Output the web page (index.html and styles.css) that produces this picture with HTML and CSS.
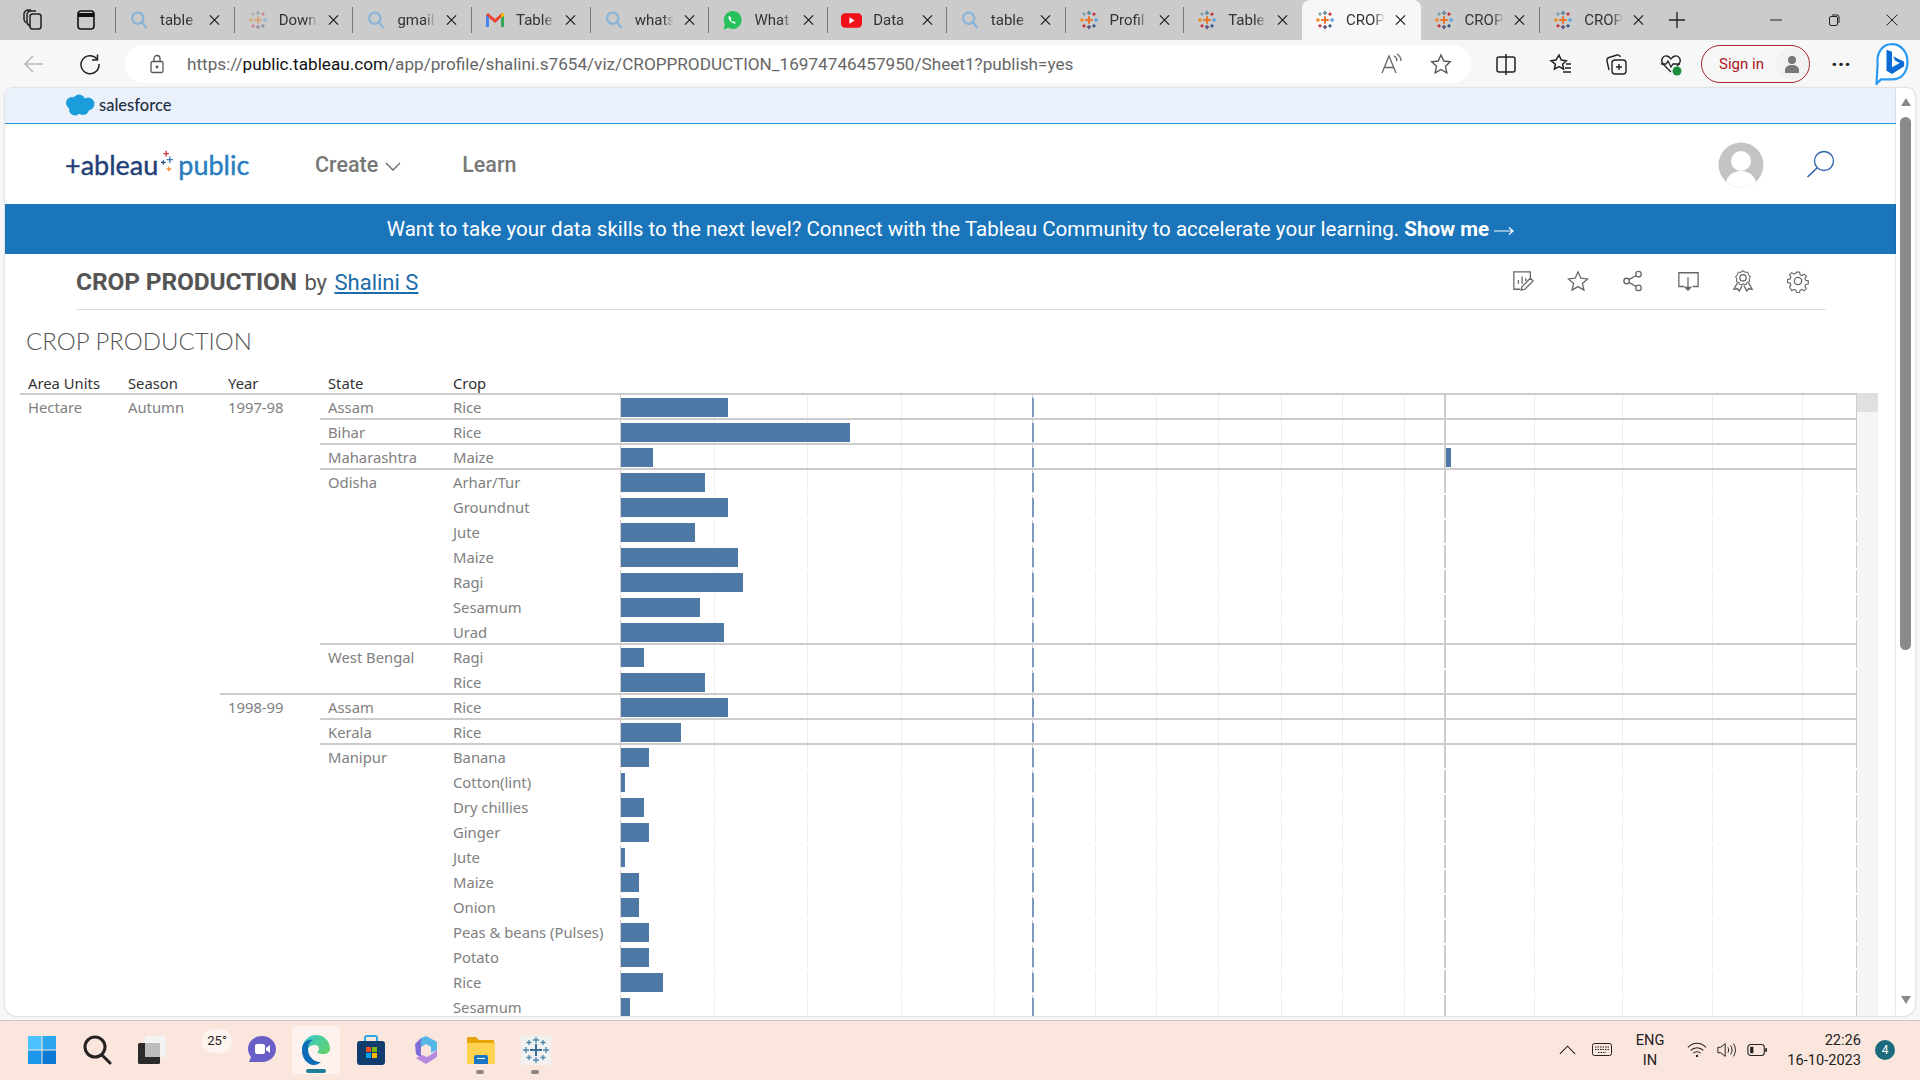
FILE: index.html
```html
<!DOCTYPE html>
<html lang="en">
<head>
    <meta charset="UTF-8">
    <title>CROP PRODUCTION</title>
    <link rel="stylesheet" href="styles.css">
</head>
<body>

<svg class="defs" width="0" height="0">
    <symbol id="tb" viewBox="0 0 24 24">
        <path d="M12 7.500v9M7.500 12h9" stroke="#e8762d" stroke-width="2.400"/>
        <path d="M12 1v5M9.500 3.500h5" stroke="#5b879b" stroke-width="1.800"/>
        <path d="M12 18v5M9.500 20.500h5" stroke="#59507a" stroke-width="1.800"/>
        <path d="M3.500 9.500v5M1 12h5" stroke="#eb912b" stroke-width="1.800"/>
        <path d="M20.500 9.500v5M18 12h5" stroke="#5fa2dd" stroke-width="1.800"/>
        <path d="M6 3v4M4 5h4" stroke="#7099a6" stroke-width="1.600"/>
        <path d="M18 3v4M16 5h4" stroke="#c72035" stroke-width="1.600"/>
        <path d="M6 17v4M4 19h4" stroke="#c72035" stroke-width="1.600"/>
        <path d="M18 17v4M16 19h4" stroke="#1f457e" stroke-width="1.600"/>
    </symbol>
    <symbol id="srch" viewBox="0 0 16 16">
        <circle cx="7" cy="6.500" r="4.500" fill="none" stroke="#8ab4d8" stroke-width="1.800"/>
        <path d="M10.500 10l3.500 4.500" stroke="#8ab4d8" stroke-width="1.800"/>
    </symbol>
    <symbol id="close" viewBox="0 0 12 12">
        <path d="M1 1l10 10M11 1L1 11" stroke="#1c1c1c" stroke-width="1.300"/>
    </symbol>
</svg>

<div class="tabstrip">
    <div class="strip-btns">
        <svg class="strip-ico" viewBox="0 0 24 24" fill="none" stroke="#222" stroke-width="1.500"><rect x="9" y="6" width="11" height="15" rx="2.500"/><path d="M9 18c-2-1-3-2-3-4V7c0-2 1-4 4-4h5"/><path d="M5 15c-1-1-2-2-2-4V6c0-2 2-4 4-4h3"/></svg>
        <svg class="strip-ico" viewBox="0 0 24 24" fill="none" stroke="#111" stroke-width="1.600"><rect x="4" y="3" width="16" height="18" rx="3"/><path d="M4 7h16" stroke-width="4"/></svg>
    </div>
    <div class="tab"><svg class="fav"><use href="#srch"/></svg><span class="tab-title">table</span><svg class="tab-x"><use href="#close"/></svg></div>
    <div class="tab"><svg class="fav faded"><use href="#tb"/></svg><span class="tab-title">Down</span><svg class="tab-x"><use href="#close"/></svg></div>
    <div class="tab"><svg class="fav"><use href="#srch"/></svg><span class="tab-title">gmail</span><svg class="tab-x"><use href="#close"/></svg></div>
    <div class="tab">
        <svg class="fav" viewBox="0 0 20 16"><path d="M1 15V3l3-1v13z" fill="#4285f4"/><path d="M19 15V3l-3-1v13z" fill="#34a853"/><path d="M1 3l2-2 7 6 7-6 2 2-9 8z" fill="#ea4335"/><path d="M16 2l3-1v3l-3 2z" fill="#fbbc04"/></svg>
        <span class="tab-title">Table</span><svg class="tab-x"><use href="#close"/></svg>
    </div>
    <div class="tab"><svg class="fav"><use href="#srch"/></svg><span class="tab-title">whats</span><svg class="tab-x"><use href="#close"/></svg></div>
    <div class="tab">
        <svg class="fav big" viewBox="0 0 20 20"><path d="M1.500 18.500l1.300-4.800A8.500 8.500 0 1 1 6.200 17z" fill="#25c15a"/><path d="M7 5.500c-1.500 1-1 3 .8 5s4 3 5.400 1.800l-1.700-1.600-1 .6c-1-.4-1.800-1.300-2.200-2.300l.7-1z" fill="#fff"/></svg>
        <span class="tab-title">What</span><svg class="tab-x"><use href="#close"/></svg>
    </div>
    <div class="tab">
        <svg class="fav big" viewBox="0 0 20 20"><rect y="3" width="20" height="14" rx="4" fill="#f0101a"/><path d="M8 7l5 3-5 3z" fill="#fff"/></svg>
        <span class="tab-title">Data</span><svg class="tab-x"><use href="#close"/></svg>
    </div>
    <div class="tab"><svg class="fav"><use href="#srch"/></svg><span class="tab-title">table</span><svg class="tab-x"><use href="#close"/></svg></div>
    <div class="tab"><svg class="fav"><use href="#tb"/></svg><span class="tab-title">Profil</span><svg class="tab-x"><use href="#close"/></svg></div>
    <div class="tab"><svg class="fav"><use href="#tb"/></svg><span class="tab-title">Table</span><svg class="tab-x"><use href="#close"/></svg></div>
    <div class="tab active"><svg class="fav"><use href="#tb"/></svg><span class="tab-title">CROP</span><svg class="tab-x"><use href="#close"/></svg></div>
    <div class="tab"><svg class="fav"><use href="#tb"/></svg><span class="tab-title">CROP</span><svg class="tab-x"><use href="#close"/></svg></div>
    <div class="tab"><svg class="fav"><use href="#tb"/></svg><span class="tab-title">CROP</span><svg class="tab-x"><use href="#close"/></svg></div>
    <svg class="new-tab" viewBox="0 0 20 20"><path d="M10 1v18M1 10h18" stroke="#222" stroke-width="1.500"/></svg>
    <div class="win-btns">
        <svg viewBox="0 0 12 12"><path d="M0 6h12" stroke="#222"/></svg>
        <svg viewBox="0 0 12 12" fill="none" stroke="#222"><rect x="1.500" y="2.500" width="8" height="9" rx="1.500"/><path d="M4 1h5a2 2 0 0 1 2 2v6"/></svg>
        <svg viewBox="0 0 12 12"><path d="M.5.500l11 11M11.500.500l-11 11" stroke="#222"/></svg>
    </div>
</div>

<div class="toolbar">
    <svg class="tool-ico back" viewBox="0 0 24 24" fill="none" stroke="#b9b9b9" stroke-width="1.500"><path d="M21 12H3M11 4l-8 8 8 8"/></svg>
    <svg class="tool-ico reload" viewBox="0 0 24 24" fill="none" stroke="#222" stroke-width="1.500"><path d="M19 7a9 9 0 1 0 2 5"/><path d="M19.500 2.500V8H14"/></svg>
    <div class="addressbar">
        <svg class="lock" viewBox="0 0 16 20" fill="none" stroke="#555" stroke-width="1.300"><rect x="2" y="7.500" width="12" height="11" rx="1.500"/><path d="M5 7.500V4.500a3 3 0 0 1 6 0v3"/><circle cx="8" cy="13" r=".8" fill="#555"/></svg>
        <div class="url">https://<b>public.tableau.com</b>/app/profile/shalini.s7654/viz/CROPPRODUCTION_16974746457950/Sheet1?publish=yes</div>
        <svg class="addr-ico" viewBox="0 0 24 24" fill="none" stroke="#666" stroke-width="1.300"><path d="M3 21L10 4l7 17M5.500 15.500h9"/><path d="M15 4c2 1 3 3 3 5M18 2c3 2 4 4 4 7"/></svg>
        <svg class="addr-ico" viewBox="0 0 24 24" fill="none" stroke="#555" stroke-width="1.400"><path d="M12 3l2.800 6 6.500.8-4.800 4.500 1.300 6.500-5.800-3.300-5.800 3.300 1.300-6.500L2.700 9.800 9.200 9z"/></svg>
    </div>
    <div class="tool-group">
        <svg class="tool-ico" viewBox="0 0 24 24" fill="none" stroke="#222" stroke-width="1.500"><rect x="3" y="5" width="18" height="15" rx="2"/><path d="M12 2v21"/></svg>
        <svg class="tool-ico" viewBox="0 0 24 24" fill="none" stroke="#222" stroke-width="1.500"><path d="M10 3l2.300 5 5 .7-3.700 3.500 1 5-4.600-2.500-4.600 2.500 1-5L2 8.700l5-.7zM17 12h5M16 16h6M14 20h8"/></svg>
        <svg class="tool-ico" viewBox="0 0 24 24" fill="none" stroke="#222" stroke-width="1.400"><rect x="8" y="8" width="14" height="14" rx="3"/><path d="M15 12v6M12 15h6M5 18L3 9c-.4-2 .6-3 2-3.500L13 3c2-.4 3 .5 3.500 2"/></svg>
        <svg class="tool-ico" viewBox="0 0 24 24" fill="none" stroke="#222" stroke-width="1.300"><path d="M12 20L4 12c-3-4 0-9 4-8 2 .4 3 1.500 4 3 1-1.500 2-2.600 4-3 4-1 7 4 4 8l-2 2"/><path d="M2 12h5l2-3 3 6 2-3h7"/><circle cx="18" cy="19" r="4.500" fill="#1e8e3e" stroke="none"/></svg>
    </div>
    <div class="signin"><span>Sign in</span><div class="signin-av"><svg viewBox="0 0 16 20"><circle cx="8" cy="6" r="4" fill="#777"/><path d="M1 19v-3c0-3 3-5 7-5s7 2 7 5v3z" fill="#777"/></svg></div></div>
    <div class="dots">&middot;&middot;&middot;</div>
    <svg class="bing" viewBox="0 0 30 38"><path d="M15 1c8 0 14 7 14 16 0 10-6 16-14 16H5l-4 4 1-18C1 9 6 1 15 1z" fill="#fff" stroke="#2b9af3" stroke-width="2"/><path d="M10 6l5 2v14l7-4-4-2-2-4 10 5v4l-11 7-5-3z" fill="#0c6cd4"/></svg>
</div>

<div class="viewport">
    <div class="page">
        <div class="sf-bar">
            <svg class="sf-cloud" viewBox="0 0 30 22" fill="#1b9ddb"><circle cx="7" cy="9" r="6"/><circle cx="14" cy="6.500" r="6"/><circle cx="23" cy="10" r="6.500"/><circle cx="18" cy="15" r="6"/><circle cx="10" cy="15.500" r="6"/></svg>
            <span class="sf-name">salesforce</span>
        </div>
        <header class="site-header">
            <div class="logo">+ableau<svg class="logo-spark" viewBox="0 0 18 30"><path d="M7 3v6M4 6h6" stroke="#d8333f" stroke-width="1.500"/><path d="M11 9v7M7.500 12.500h7" stroke="#3b78b5" stroke-width="1.500"/><path d="M4 13v5M1.500 15.500h5" stroke="#1f457e" stroke-width="1.300"/><path d="M10 20v5M7.500 22.500h5" stroke="#eb912b" stroke-width="1.500"/></svg><span class="logo-public">public</span></div>
            <nav class="main-nav">
                <a class="nav-create">Create<svg viewBox="0 0 16 10" fill="none" stroke="#666" stroke-width="1.300"><path d="M1 1l7 7 7-7"/></svg></a>
                <a>Learn</a>
            </nav>
            <div class="avatar"><svg viewBox="0 0 46 46"><defs><clipPath id="av"><circle cx="23" cy="23" r="22.500"/></clipPath></defs><circle cx="23" cy="23" r="22.500" fill="#c4c4c4"/><g clip-path="url(#av)" fill="#fff"><circle cx="23" cy="19" r="10"/><ellipse cx="23" cy="42" rx="15" ry="13"/></g></svg></div>
            <svg class="site-search" viewBox="0 0 30 30" fill="none" stroke="#2b5fa8" stroke-width="1.300"><circle cx="18" cy="11" r="9.500"/><path d="M11 18L1.500 27" stroke-width="1.600"/></svg>
        </header>
        <div class="banner">Want to take your data skills to the next level? Connect with the Tableau Community to accelerate your learning. <b>Show me</b> <svg class="banner-arrow" viewBox="0 0 20 10" fill="none" stroke="white" stroke-width="1.200"><path d="M0 5h19M15 1.500L19 5l-4 3.500"/></svg></div>
        <div class="viz-head">
            <div class="viz-name"><b>CROP PRODUCTION</b> <span class="by">by</span> <a>Shalini S</a></div>
            <div class="viz-actions">
                <svg viewBox="0 0 24 24"><path d="M20 9V2H2v19h7M7 15v-4M11 15V7M15 12V9M10 22l1-4 9-9 3 3-9 9z"/></svg>
                <svg viewBox="0 0 24 24"><path d="M12 2l3 7 7.500.7-5.700 5 1.700 7.300-6.500-3.900-6.500 3.900 1.700-7.300-5.700-5L9 9z"/></svg>
                <svg viewBox="0 0 24 24"><circle cx="5" cy="12" r="3"/><circle cx="18" cy="4.500" r="3"/><circle cx="18" cy="19.500" r="3"/><path d="M7.600 10.500l7.800-4.500M7.600 13.500l7.800 4.500"/></svg>
                <svg viewBox="0 0 24 24"><path d="M8 18H2V3h21v15h-6M12 8v12"/><path d="M9 19h6l-3 3z" fill="#666"/></svg>
                <svg viewBox="0 0 24 24"><path d="M12 1l3 2 3.500 0 1 3.500L22 9l-1.500 3 .5 3.500-3 1.500-2 3-4-1-4 1-2-3-3-1.500.5-3.500L2 9l2.500-2.500L5.500 3 9 3z" transform="translate(2.400 0) scale(.8)"/><circle cx="12" cy="8.500" r="3.500"/><path d="M6 14l-4 7 4-.5 2 2.500 3-6M18 14l4 7-4-.5-2 2.500-3-6"/></svg>
                <svg viewBox="0 0 24 24"><circle cx="12" cy="12" r="4"/><path d="M10 1h4l.6 3.200 2.300 1 2.700-1.800 2.800 2.800-1.800 2.700 1 2.300 3.200.6v4l-3.200.6-1 2.300 1.800 2.700-2.800 2.800-2.700-1.800-2.300 1-.6 3.200h-4l-.6-3.200-2.300-1-2.700 1.800L1.400 19.600l1.800-2.700-1-2.300L-1 14v-4l3.200-.6 1-2.300L1.400 4.400l2.800-2.800 2.700 1.800 2.300-1z" transform="translate(1.500 1.500) scale(.875)"/></svg>
            </div>
        </div>
        <section class="viz">
            <h2 class="viz-title">CROP PRODUCTION</h2>
            <div class="sheet">
                <div class="table">
                    <div class="thead">
                        <div class="c-area">Area Units</div>
                        <div class="c-season">Season</div>
                        <div class="c-year">Year</div>
                        <div class="c-state">State</div>
                        <div class="c-crop">Crop</div>
                    </div>
                    <div class="row first"><div class="c-area">Hectare</div><div class="c-season">Autumn</div><div class="c-year">1997-98</div><div class="c-state">Assam</div><div class="c-crop">Rice</div><div class="plot"><div class="pane p1"><div class="bar" style="width:107px"></div></div><div class="pane p2"><div class="bar thin"></div></div><div class="pane p3"></div></div></div>
                    <div class="row new-state"><div class="c-area"></div><div class="c-season"></div><div class="c-year"></div><div class="c-state">Bihar</div><div class="c-crop">Rice</div><div class="plot"><div class="pane p1"><div class="bar" style="width:229px"></div></div><div class="pane p2"><div class="bar thin"></div></div><div class="pane p3"></div></div></div>
                    <div class="row new-state"><div class="c-area"></div><div class="c-season"></div><div class="c-year"></div><div class="c-state">Maharashtra</div><div class="c-crop">Maize</div><div class="plot"><div class="pane p1"><div class="bar" style="width:32px"></div></div><div class="pane p2"><div class="bar thin"></div></div><div class="pane p3"><div class="bar" style="width:5px"></div></div></div></div>
                    <div class="row new-state"><div class="c-area"></div><div class="c-season"></div><div class="c-year"></div><div class="c-state">Odisha</div><div class="c-crop">Arhar/Tur</div><div class="plot"><div class="pane p1"><div class="bar" style="width:84px"></div></div><div class="pane p2"><div class="bar thin"></div></div><div class="pane p3"></div></div></div>
                    <div class="row"><div class="c-area"></div><div class="c-season"></div><div class="c-year"></div><div class="c-state"></div><div class="c-crop">Groundnut</div><div class="plot"><div class="pane p1"><div class="bar" style="width:107px"></div></div><div class="pane p2"><div class="bar thin"></div></div><div class="pane p3"></div></div></div>
                    <div class="row"><div class="c-area"></div><div class="c-season"></div><div class="c-year"></div><div class="c-state"></div><div class="c-crop">Jute</div><div class="plot"><div class="pane p1"><div class="bar" style="width:74px"></div></div><div class="pane p2"><div class="bar thin"></div></div><div class="pane p3"></div></div></div>
                    <div class="row"><div class="c-area"></div><div class="c-season"></div><div class="c-year"></div><div class="c-state"></div><div class="c-crop">Maize</div><div class="plot"><div class="pane p1"><div class="bar" style="width:117px"></div></div><div class="pane p2"><div class="bar thin"></div></div><div class="pane p3"></div></div></div>
                    <div class="row"><div class="c-area"></div><div class="c-season"></div><div class="c-year"></div><div class="c-state"></div><div class="c-crop">Ragi</div><div class="plot"><div class="pane p1"><div class="bar" style="width:122px"></div></div><div class="pane p2"><div class="bar thin"></div></div><div class="pane p3"></div></div></div>
                    <div class="row"><div class="c-area"></div><div class="c-season"></div><div class="c-year"></div><div class="c-state"></div><div class="c-crop">Sesamum</div><div class="plot"><div class="pane p1"><div class="bar" style="width:79px"></div></div><div class="pane p2"><div class="bar thin"></div></div><div class="pane p3"></div></div></div>
                    <div class="row"><div class="c-area"></div><div class="c-season"></div><div class="c-year"></div><div class="c-state"></div><div class="c-crop">Urad</div><div class="plot"><div class="pane p1"><div class="bar" style="width:103px"></div></div><div class="pane p2"><div class="bar thin"></div></div><div class="pane p3"></div></div></div>
                    <div class="row new-state"><div class="c-area"></div><div class="c-season"></div><div class="c-year"></div><div class="c-state">West Bengal</div><div class="c-crop">Ragi</div><div class="plot"><div class="pane p1"><div class="bar" style="width:23px"></div></div><div class="pane p2"><div class="bar thin"></div></div><div class="pane p3"></div></div></div>
                    <div class="row"><div class="c-area"></div><div class="c-season"></div><div class="c-year"></div><div class="c-state"></div><div class="c-crop">Rice</div><div class="plot"><div class="pane p1"><div class="bar" style="width:84px"></div></div><div class="pane p2"><div class="bar thin"></div></div><div class="pane p3"></div></div></div>
                    <div class="row new-state new-year"><div class="c-area"></div><div class="c-season"></div><div class="c-year">1998-99</div><div class="c-state">Assam</div><div class="c-crop">Rice</div><div class="plot"><div class="pane p1"><div class="bar" style="width:107px"></div></div><div class="pane p2"><div class="bar thin"></div></div><div class="pane p3"></div></div></div>
                    <div class="row new-state"><div class="c-area"></div><div class="c-season"></div><div class="c-year"></div><div class="c-state">Kerala</div><div class="c-crop">Rice</div><div class="plot"><div class="pane p1"><div class="bar" style="width:60px"></div></div><div class="pane p2"><div class="bar thin"></div></div><div class="pane p3"></div></div></div>
                    <div class="row new-state"><div class="c-area"></div><div class="c-season"></div><div class="c-year"></div><div class="c-state">Manipur</div><div class="c-crop">Banana</div><div class="plot"><div class="pane p1"><div class="bar" style="width:28px"></div></div><div class="pane p2"><div class="bar thin"></div></div><div class="pane p3"></div></div></div>
                    <div class="row"><div class="c-area"></div><div class="c-season"></div><div class="c-year"></div><div class="c-state"></div><div class="c-crop">Cotton(lint)</div><div class="plot"><div class="pane p1"><div class="bar" style="width:4px"></div></div><div class="pane p2"><div class="bar thin"></div></div><div class="pane p3"></div></div></div>
                    <div class="row"><div class="c-area"></div><div class="c-season"></div><div class="c-year"></div><div class="c-state"></div><div class="c-crop">Dry chillies</div><div class="plot"><div class="pane p1"><div class="bar" style="width:23px"></div></div><div class="pane p2"><div class="bar thin"></div></div><div class="pane p3"></div></div></div>
                    <div class="row"><div class="c-area"></div><div class="c-season"></div><div class="c-year"></div><div class="c-state"></div><div class="c-crop">Ginger</div><div class="plot"><div class="pane p1"><div class="bar" style="width:28px"></div></div><div class="pane p2"><div class="bar thin"></div></div><div class="pane p3"></div></div></div>
                    <div class="row"><div class="c-area"></div><div class="c-season"></div><div class="c-year"></div><div class="c-state"></div><div class="c-crop">Jute</div><div class="plot"><div class="pane p1"><div class="bar" style="width:4px"></div></div><div class="pane p2"><div class="bar thin"></div></div><div class="pane p3"></div></div></div>
                    <div class="row"><div class="c-area"></div><div class="c-season"></div><div class="c-year"></div><div class="c-state"></div><div class="c-crop">Maize</div><div class="plot"><div class="pane p1"><div class="bar" style="width:18px"></div></div><div class="pane p2"><div class="bar thin"></div></div><div class="pane p3"></div></div></div>
                    <div class="row"><div class="c-area"></div><div class="c-season"></div><div class="c-year"></div><div class="c-state"></div><div class="c-crop">Onion</div><div class="plot"><div class="pane p1"><div class="bar" style="width:18px"></div></div><div class="pane p2"><div class="bar thin"></div></div><div class="pane p3"></div></div></div>
                    <div class="row"><div class="c-area"></div><div class="c-season"></div><div class="c-year"></div><div class="c-state"></div><div class="c-crop">Peas &amp; beans (Pulses)</div><div class="plot"><div class="pane p1"><div class="bar" style="width:28px"></div></div><div class="pane p2"><div class="bar thin"></div></div><div class="pane p3"></div></div></div>
                    <div class="row"><div class="c-area"></div><div class="c-season"></div><div class="c-year"></div><div class="c-state"></div><div class="c-crop">Potato</div><div class="plot"><div class="pane p1"><div class="bar" style="width:28px"></div></div><div class="pane p2"><div class="bar thin"></div></div><div class="pane p3"></div></div></div>
                    <div class="row"><div class="c-area"></div><div class="c-season"></div><div class="c-year"></div><div class="c-state"></div><div class="c-crop">Rice</div><div class="plot"><div class="pane p1"><div class="bar" style="width:42px"></div></div><div class="pane p2"><div class="bar thin"></div></div><div class="pane p3"></div></div></div>
                    <div class="row"><div class="c-area"></div><div class="c-season"></div><div class="c-year"></div><div class="c-state"></div><div class="c-crop">Sesamum</div><div class="plot"><div class="pane p1"><div class="bar" style="width:9px"></div></div><div class="pane p2"><div class="bar thin"></div></div><div class="pane p3"></div></div></div>
                </div>
                <div class="sheet-scroll"><div class="sheet-thumb"></div></div>
            </div>
        </section>
    </div>
    <div class="vscroll">
        <div class="arrow-up"></div>
        <div class="vthumb"></div>
        <div class="arrow-down"></div>
    </div>
</div>

<footer class="taskbar">
    <div class="task-icons">
        <div class="task"><svg viewBox="0 0 30 30"><path d="M1 1h13.500v13.500H1z" fill="#4cc2ff"/><path d="M15.500 1H29v13.500H15.500z" fill="#2aa5ee"/><path d="M1 15.500h13.500V29H1z" fill="#1b96e8"/><path d="M15.500 15.500H29V29H15.500z" fill="#0a78d4"/></svg></div>
        <div class="task"><svg viewBox="0 0 30 30" fill="none" stroke="#222" stroke-width="3"><circle cx="13" cy="12" r="10"/><path d="M20 20l8 8" stroke-linecap="round"/></svg></div>
        <div class="task"><svg viewBox="0 0 30 30"><rect x="1" y="8" width="22" height="21" rx="1.500" fill="#2b2b2b"/><rect x="8" y="1" width="21" height="21" rx="1.500" fill="#f3f3f3"/><rect x="8" y="8" width="15" height="14" fill="#bdbdbd"/></svg></div>
        <div class="task weather"><span>25&deg;</span></div>
        <div class="task"><svg viewBox="0 0 30 30"><path d="M15 1c8 0 14 6 14 13s-6 13-14 13H2l2-5C2 19 1 17 1 14 1 7 7 1 15 1z" fill="#6a5fc9"/><rect x="8" y="9" width="10" height="10" rx="2" fill="#fff"/><path d="M19 13l4-3v8l-4-3z" fill="#fff"/></svg></div>
        <div class="task current"><svg viewBox="0 0 30 30"><defs><linearGradient id="edgeA" x1="0" y1="0" x2="1" y2="1"><stop offset="0" stop-color="#36c6d8"/><stop offset="1" stop-color="#6fd64a"/></linearGradient></defs><path d="M1 15C1 6 8 0 15 0c8 0 14 6 14 14 0 3-3 5-7 5-3 0-6-1-6-2 3-1 3-7-2-7-6 0-9 5-8 10 1 4 4 8 7 9C6 29 1 23 1 15z" fill="url(#edgeA)"/><path d="M1 15C1 8 6 4 12 5c-3 1-5 4-5 9 0 8 7 14 13 13-2 2-5 3-7 3C6 30 1 23 1 15z" fill="#0c6cb8"/></svg><i class="run-bar"></i></div>
        <div class="task"><svg viewBox="0 0 30 30"><path d="M9 7V3q0-2 2-2h8q2 0 2 2v4" fill="none" stroke="#29a8e0" stroke-width="2"/><rect x="1" y="6" width="28" height="24" rx="3" fill="#113d6e"/><path d="M10 12h5v5h-5z" fill="#f25022"/><path d="M16 12h5v5h-5z" fill="#7fba00"/><path d="M10 18h5v5h-5z" fill="#00a4ef"/><path d="M16 18h5v5h-5z" fill="#ffb900"/></svg></div>
        <div class="task"><svg viewBox="0 0 30 30"><path d="M15 1l11 6v8l-6 3v-6l-5-3-5 3V3z" fill="#55b6e8"/><path d="M4 9l6-6v20l-5-4z" fill="#7c6fd8"/><path d="M26 15v7l-11 7-10-6 6-3 5 2 5-3z" fill="#b78ae0"/></svg></div>
        <div class="task open"><svg viewBox="0 0 30 30"><path d="M1 3q0-1 1-1h8l3 3h15v5H1z" fill="#e5a50a"/><path d="M1 8h28v21H1z" fill="#ffd34f"/><path d="M8 22q0-2 2-2h10q2 0 2 2v7H8z" fill="#1a75c4"/><path d="M11 23.500h8" stroke="#fff"/></svg><i class="run-dot"></i></div>
        <div class="task open"><svg viewBox="0 0 30 30"><rect width="30" height="30" fill="#f1f1f1"/><path d="M15 9v12M9 15h12" stroke="#3a6f95" stroke-width="2"/><path d="M15 2v6M12 5h6M15 22v6M12 25h6M5 12v6M2 15h6M25 12v6M22 15h6M8 5v5M5.500 7.500h5M22 5v5M19.500 7.500h5M8 20v5M5.500 22.500h5M22 20v5M19.500 22.500h5" stroke="#4c86ad" stroke-width="1.300"/></svg><i class="run-dot"></i></div>
    </div>
    <div class="tray">
        <svg class="tray-ico chevron" viewBox="0 0 18 10" fill="none" stroke="#222" stroke-width="1.200"><path d="M1 9l8-8 8 8"/></svg>
        <svg class="tray-ico kbd" viewBox="0 0 20 14" fill="none" stroke="#222"><rect x=".5" y=".5" width="19" height="12" rx="2"/><path d="M3 4h14M3 6.500h14M6 9.500h8" stroke-dasharray="1.500 1"/></svg>
        <div class="lang">ENG<br>IN</div>
        <svg class="tray-ico" viewBox="0 0 22 18" fill="none" stroke="#222" stroke-width="1.200"><path d="M1 6c6-6 14-6 20 0M4 9.500c4-4 10-4 14 0M7 12.500c2-2 6-2 8 0"/><circle cx="11" cy="15.500" r="1.300" fill="#222" stroke="none"/></svg>
        <svg class="tray-ico" viewBox="0 0 22 18" fill="none" stroke="#222" stroke-width="1.100"><path d="M1 6v6h3l5 4V2L4 6zM12 6c1 2 1 4 0 6M15 4c2 3 2 7 0 10M18 2c3 4 3 10 0 14"/></svg>
        <svg class="tray-ico" viewBox="0 0 22 14" fill="none" stroke="#222" stroke-width="1.200"><rect x="1" y="1" width="18" height="12" rx="3"/><rect x="3.500" y="3.500" width="3.500" height="7" fill="#222" stroke="none"/><path d="M21 5v4" stroke-width="2"/></svg>
        <div class="clock">22:26<br>16-10-2023</div>
        <div class="notif">4</div>
    </div>
</footer>

</body>
</html>
```

FILE: styles.css
```css
* {
    box-sizing: border-box;
}

body {
    margin: 0;
    width: 1920px;
    height: 1080px;
    overflow: hidden;
    font-family: Roboto, sans-serif;
    color: #222;
    background-color: #f7f7f7;
}

.defs {
    display: block;
    height: 0;
}

/* browser tabs */
.tabstrip {
    height: 40px;
    display: flex;
    align-items: stretch;
    background-color: #cbcbcb;
}

.strip-btns {
    width: 115px;
    padding-left: 21px;
    display: flex;
    align-items: center;
    gap: 29px;
}

.strip-ico {
    width: 24px;
    height: 24px;
}

.tab {
    width: 118.7px;
    display: flex;
    align-items: center;
    padding-left: 13px;
    border-left: 1px solid #777;
    margin: 7px 0;
}

.tab.active {
    margin: 0;
    border-left: none;
    background-color: #f7f7f7;
    border-radius: 8px 8px 0 0;
}

.tab.active + .tab {
    border-left: none;
}

.fav {
    width: 20px;
    height: 20px;
    flex: none;
}

.fav.big {
    width: 21px;
    height: 21px;
}

.fav.faded {
    opacity: 0.45;
}

.tab-title {
    width: 39px;
    margin-left: 11px;
    font-size: 15px;
    white-space: nowrap;
    overflow: hidden;
    color: #333;
    -webkit-mask-image: linear-gradient(to right, #000 70%, transparent);
    mask-image: linear-gradient(to right, #000 70%, transparent);
}

.tab-x {
    width: 11px;
    height: 12px;
    margin-left: 10px;
    flex: none;
}

.new-tab {
    width: 18px;
    height: 18px;
    margin: 11px 0 0 10px;
}

.win-btns {
    margin-left: 84px;
    display: flex;
    align-items: center;
    gap: 46px;
}

.win-btns svg {
    width: 12px;
    height: 12px;
}

/* address bar row */
.toolbar {
    height: 48px;
    display: flex;
    align-items: center;
    background-color: #f7f7f7;
}

.tool-ico {
    width: 24px;
    height: 24px;
    flex: none;
}

.back {
    margin-left: 22px;
}

.reload {
    margin-left: 32px;
}

.addressbar {
    width: 1346px;
    height: 38px;
    margin-left: 23px;
    padding: 0 18px 0 24px;
    display: flex;
    align-items: center;
    background-color: white;
    border-radius: 19px;
}

.lock {
    width: 16px;
    height: 20px;
    flex: none;
}

.url {
    flex: 1;
    margin-left: 22px;
    font-size: 17.15px;
    color: #666;
    white-space: nowrap;
}

.url b {
    font-weight: 400;
    color: #111;
}

.addr-ico {
    width: 24px;
    height: 24px;
    margin-left: 26px;
    flex: none;
}

.tool-group {
    margin-left: 23px;
    display: flex;
    gap: 31px;
}

.signin {
    width: 109px;
    height: 38px;
    margin-left: 18px;
    padding-left: 17px;
    display: flex;
    align-items: center;
    justify-content: space-between;
    border: 1.5px solid #a8282d;
    border-radius: 19px;
    font-size: 15px;
    color: #a8141c;
}

.signin-av {
    width: 32px;
    height: 32px;
    margin-right: 1px;
    display: flex;
    align-items: center;
    justify-content: center;
    background-color: #f1f1f1;
    border-radius: 50%;
}

.signin-av svg {
    width: 16px;
    height: 20px;
}

.dots {
    width: 22px;
    margin-left: 20px;
    font-size: 22px;
    font-weight: bold;
    text-align: center;
}

.bing {
    width: 34px;
    height: 42px;
    margin-left: 23px;
}

/* page */
.viewport {
    height: 932px;
    padding-left: 5px;
    display: flex;
    align-items: flex-start;
}

.page {
    width: 1891px;
    height: 928px;
    overflow: hidden;
    background-color: white;
    border-radius: 8px 0 0 12px;
    box-shadow: 0 0 2px rgba(0, 0, 0, 0.3);
}

.vscroll {
    width: 19px;
    height: 928px;
    padding: 10px 4px 4px;
    display: flex;
    flex-direction: column;
    align-items: center;
    background-color: white;
    border-radius: 0 8px 12px 0;
    box-shadow: 0 0 2px rgba(0, 0, 0, 0.3);
}

.arrow-up,
.arrow-down {
    width: 0;
    height: 0;
    border-left: 5px solid transparent;
    border-right: 5px solid transparent;
}

.arrow-up {
    border-bottom: 8px solid #8a8a8a;
}

.arrow-down {
    margin-top: 346px;
    border-top: 8px solid #8a8a8a;
}

.vthumb {
    width: 11px;
    height: 533px;
    margin-top: 11px;
    flex: none;
    background-color: #8a8a8a;
    border-radius: 6px;
}

.sf-bar {
    height: 36px;
    padding-left: 60px;
    display: flex;
    align-items: center;
    padding-bottom: 2px;
    background-color: #eaf1fb;
    border-bottom: 1.5px solid #2b94d6;
}

.sf-cloud {
    width: 30px;
    height: 22px;
}

.sf-name {
    margin-left: 4px;
    font-family: Lato, sans-serif;
    font-size: 16.5px;
    font-weight: 500;
    color: #1f2f3f;
}

.site-header {
    height: 80px;
    display: flex;
    align-items: center;
    padding: 1px 0 0 60px;
}

.logo {
    width: 250px;
    display: flex;
    align-items: center;
    font-family: Lato, sans-serif;
    font-size: 27px;
    color: #1f3f77;
    -webkit-text-stroke: 0.4px;
}

.logo-spark {
    width: 20px;
    height: 28px;
    margin-top: -5px;
}

.logo-public {
    color: #2a7cc0;
}

.main-nav {
    display: flex;
    gap: 61px;
    font-size: 21.5px;
    font-weight: 500;
    color: #777;
}

.nav-create {
    display: flex;
    align-items: center;
    gap: 7px;
}

.nav-create svg {
    width: 16px;
    height: 10px;
    margin-top: 4px;
}

.avatar {
    width: 46px;
    height: 46px;
    margin-left: auto;
}

.site-search {
    width: 30px;
    height: 30px;
    margin: 0 60px 0 42px;
}

.banner {
    height: 50px;
    line-height: 50px;
    text-align: center;
    font-size: 20.55px;
    color: white;
    background-color: #1b75bb;
}

.banner b {
    font-weight: 700;
}

.banner-arrow {
    width: 20px;
    height: 10px;
}

.viz-head {
    width: 1750px;
    height: 56px;
    margin-left: 71px;
    display: flex;
    align-items: center;
    justify-content: space-between;
    border-bottom: 1.5px solid #ddd;
}

.viz-name {
    font-size: 22px;
    color: #555;
}

.viz-name b {
    font-size: 24.5px;
    font-weight: 700;
    letter-spacing: -0.15px;
}

.viz-name .by {
    margin-left: 2px;
}

.viz-name a {
    margin-left: 2px;
    color: #1b6ca8;
    text-decoration: underline;
}

.viz-actions {
    margin: -2px 17px 0 0;
    display: flex;
    gap: 33px;
}

.viz-actions svg {
    width: 22px;
    height: 24px;
    fill: none;
    stroke: #666;
    stroke-width: 1.4;
}

/* the worksheet */
.viz {
    padding-left: 15px;
}

.viz-title {
    margin: 0;
    height: 53px;
    padding: 16px 0 0 6px;
    font-family: Lato, sans-serif;
    font-size: 24px;
    font-weight: 300;
    color: #555;
}

.sheet {
    display: flex;
    align-items: stretch;
}

.table {
    width: 1837px;
    font-family: "Noto Sans", sans-serif;
    font-size: 14.8px;
    color: #808080;
}

.thead {
    height: 30px;
    display: flex;
    align-items: flex-end;
    color: #333;
}

.row {
    height: 25px;
    display: flex;
}

.c-area,
.c-season,
.c-year {
    width: 100px;
    padding-left: 8px;
}

.c-state {
    width: 125px;
    padding-left: 8px;
}

.c-crop {
    width: 175px;
    padding-left: 8px;
    white-space: nowrap;
}

.row > div {
    border-top: 2px solid transparent;
    line-height: 25px;
}

.row.first > div,
.row.new-state .c-state,
.row.new-state .c-crop,
.row.new-state .plot,
.row.new-year .c-year {
    border-top-color: #ccc;
}

.plot {
    flex: 1;
    display: flex;
}

.pane {
    width: 412px;
    padding-top: 3px;
    border-left: 1px solid #ccc;
    background-repeat: no-repeat;
    background-size: 1px 100%;
    background-image: linear-gradient(#eee, #eee), linear-gradient(#eee, #eee), linear-gradient(#eee, #eee), linear-gradient(#eee, #eee), linear-gradient(#eee, #eee), linear-gradient(#eee, #eee);
}

.p1 {
    background-position: 93px 0, 186px 0, 280px 0, 373px 0, -9px 0, -9px 0;
}

.p2 {
    background-position: 62px 0, 123px 0, 185px 0, 248px 0, 309px 0, 371px 0;
}

.p3 {
    width: 413px;
    border-left: 2px solid #ccc;
    border-right: 1px solid #ccc;
    background-position: 88px 0, 176px 0, 266px 0, 356px 0, -9px 0, -9px 0;
}

.bar {
    height: 19px;
    background-color: #4e79a7;
}

.bar.thin {
    width: 2px;
    margin-left: -1px;
    background-color: #7d99bd;
}

.sheet-scroll {
    width: 21px;
    margin-top: 30px;
    background-color: #f5f5f5;
}

.sheet-thumb {
    height: 19px;
    background-color: #e0e0e0;
}

/* windows taskbar */
.taskbar {
    height: 60px;
    padding-bottom: 2px;
    display: flex;
    align-items: center;
    justify-content: space-between;
    background-color: #fbe6de;
    border-top: 1px solid #cfc4bf;
}

.task-icons {
    display: flex;
    padding-left: 14px;
}

.task {
    width: 55px;
    height: 48px;
    display: flex;
    align-items: center;
    justify-content: center;
    position: relative;
}

.task svg {
    width: 30px;
    height: 30px;
}

.task.current {
    background-color: #fdf2ee;
    border-radius: 4px;
    margin: 0 3px;
    width: 48px;
}

.weather {
    justify-content: flex-end;
}

.weather span {
    width: 30px;
    height: 24px;
    line-height: 24px;
    margin: -18px 2px 0 0;
    text-align: center;
    font-size: 13px;
    background-color: #fdf3ef;
    border-radius: 12px;
}

.run-bar {
    position: absolute;
    bottom: 1px;
    left: 14px;
    width: 20px;
    height: 4px;
    background-color: #1f7f94;
    border-radius: 2px;
}

.run-dot {
    position: absolute;
    bottom: 0;
    left: 23px;
    width: 8px;
    height: 4px;
    background-color: #8a8480;
    border-radius: 2px;
}

.tray {
    display: flex;
    align-items: center;
    font-size: 14.6px;
}

.tray-ico {
    width: 20px;
    height: 18px;
    margin-right: 10px;
}

.chevron {
    width: 17px;
    height: 10px;
    margin-right: 16px;
}

.kbd {
    margin-right: 13px;
}

.lang {
    width: 50px;
    margin-right: 12px;
    text-align: center;
    line-height: 20px;
}

.clock {
    width: 80px;
    margin-left: 4px;
    text-align: right;
    line-height: 20px;
}

.notif {
    width: 20px;
    height: 20px;
    margin: 0 25px 0 14px;
    line-height: 20px;
    text-align: center;
    font-size: 12px;
    color: white;
    background-color: #1b6b7c;
    border-radius: 50%;
}
```
